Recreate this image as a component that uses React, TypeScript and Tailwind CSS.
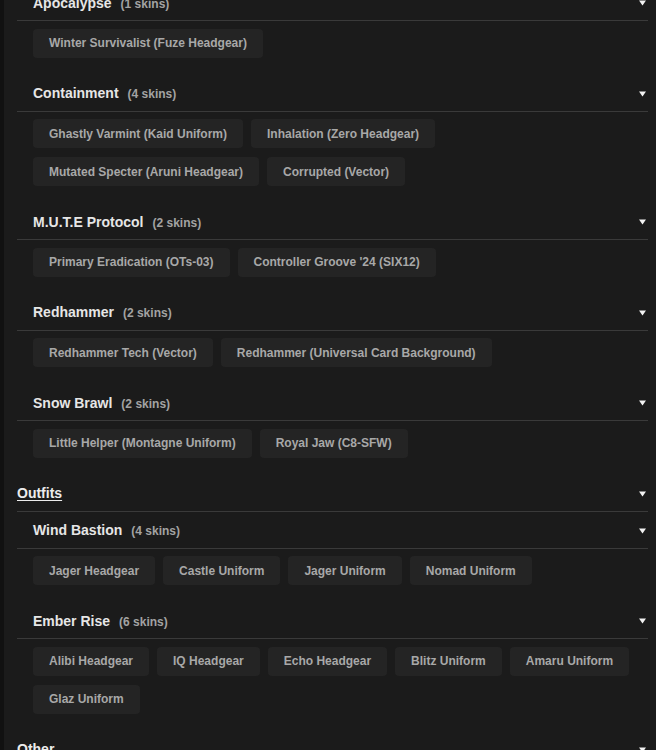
const events = [
  { name: "Apocalypse", skins: ["Winter Survivalist (Fuze Headgear)"] },
  {
    name: "Containment",
    skins: [
      "Ghastly Varmint (Kaid Uniform)",
      "Inhalation (Zero Headgear)",
      "Mutated Specter (Aruni Headgear)",
      "Corrupted (Vector)",
    ],
  },
  {
    name: "M.U.T.E Protocol",
    skins: ["Primary Eradication (OTs-03)", "Controller Groove '24 (SIX12)"],
  },
  {
    name: "Redhammer",
    skins: ["Redhammer Tech (Vector)", "Redhammer (Universal Card Background)"],
  },
  {
    name: "Snow Brawl",
    skins: ["Little Helper (Montagne Uniform)", "Royal Jaw (C8-SFW)"],
  },
];

const outfits = [
  {
    name: "Wind Bastion",
    skins: ["Jager Headgear", "Castle Uniform", "Jager Uniform", "Nomad Uniform"],
  },
  {
    name: "Ember Rise",
    skins: [
      "Alibi Headgear",
      "IQ Headgear",
      "Echo Headgear",
      "Blitz Uniform",
      "Amaru Uniform",
      "Glaz Uniform",
    ],
  },
];

export default function App() {
  return (
    <div
      className="flex min-h-screen bg-[#1b1b1b] overflow-hidden"
      style={{ fontFamily: '"Liberation Sans", Arial, sans-serif' }}
    >
      <div className="w-[4px] shrink-0 bg-[#111111]" />
      <div className="flex-1 pl-[13px] pr-[8px]">
        {/* list is scrolled, first category header is above the fold */}
        <div className="-mt-[16px]">
          {events.map((g) => (
            <Group key={g.name} name={g.name} skins={g.skins} />
          ))}
        </div>
        <Category title="Outfits" />
        {outfits.map((g) => (
          <Group key={g.name} name={g.name} skins={g.skins} />
        ))}
        <Category title="Other" />
      </div>
    </div>
  );
}

function Arrow() {
  return (
    <svg width="7" height="6" viewBox="0 0 7 6" className="mr-[2px]">
      <path d="M0 0.5 L7 0.5 L3.5 5.5 Z" fill="#f2f2f2" />
    </svg>
  );
}

function Category(props: { title: string }) {
  return (
    <div className="flex h-[37px] items-center justify-between border-b border-[#3a3a3a] pt-[2px]">
      <span className="text-[14px] font-bold text-[#ececec] underline underline-offset-2">
        {props.title}
      </span>
      <Arrow />
    </div>
  );
}

function Group(props: { name: string; skins: string[] }) {
  return (
    <div>
      <div className="flex h-[37px] items-center justify-between border-b border-[#3a3a3a] pl-4 pt-[2px]">
        <div className="flex items-baseline">
          <span className="text-[14px] font-bold text-[#e6e6e6]">
            {props.name}
          </span>
          <span className="ml-[9px] text-[12px] font-bold text-[#a3a3a3]">
            ({props.skins.length} skins)
          </span>
        </div>
        <Arrow />
      </div>
      <div className="flex flex-wrap gap-x-[8px] gap-y-[9px] pl-4 pt-[7.5px] pb-[17px]">
        {props.skins.map((s) => (
          <div
            key={s}
            className="flex h-[29px] items-center rounded-[4px] bg-[#242424] px-4 text-[12px] font-bold text-[#a8a8a8]"
          >
            {s}
          </div>
        ))}
      </div>
    </div>
  );
}
